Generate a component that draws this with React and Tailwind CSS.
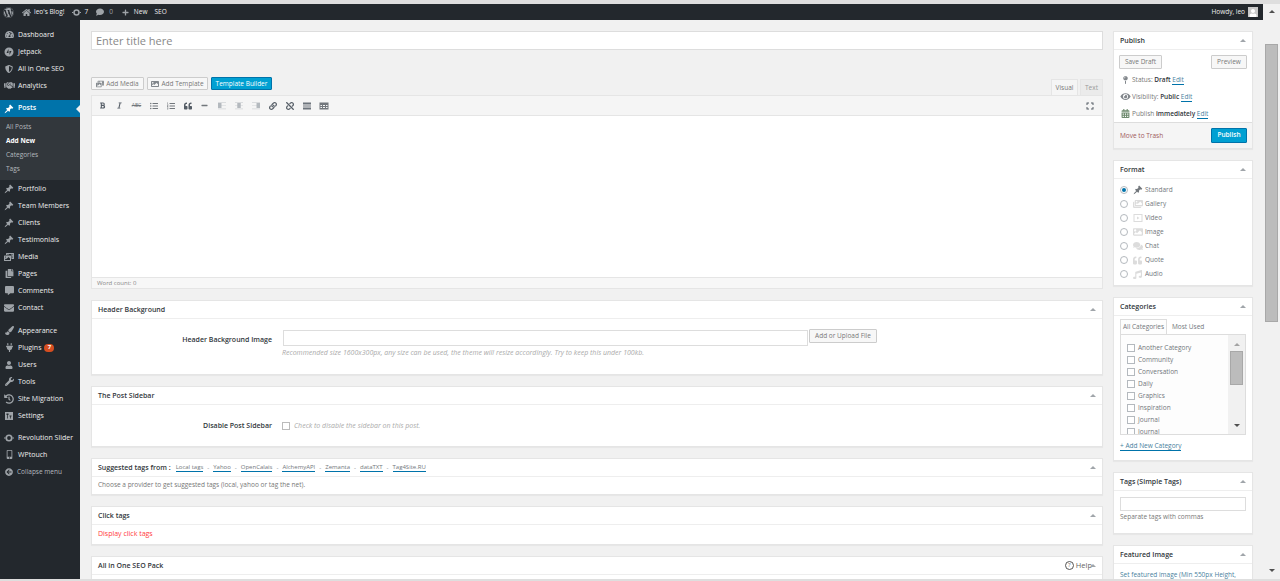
import {
  FaWordpress, FaHome, FaComment, FaPlus, FaShieldAlt, FaHandshake, FaPhotoVideo, FaCopy, FaCommentAlt,
  FaEnvelope, FaPaintBrush, FaPlug, FaUser, FaWrench, FaHistory, FaMobileAlt, FaArrowCircleLeft,
  FaBold, FaItalic, FaListUl, FaListOl, FaQuoteLeft, FaMinus, FaLink, FaUnlink, FaExpand, FaMapPin,
  FaEye, FaCalendarAlt, FaImages, FaImage, FaComments, FaMusic, FaTachometerAlt,
} from "react-icons/fa";

const pinPath =
  "M10.44 3.02l1.82-1.82 6.36 6.35-1.83 1.82c-1.05-.68-2.48-.57-3.41.36l-.75.75c-.92.93-1.04 2.35-.35 3.41l-1.83 1.82-2.41-2.41-2.8 2.79c-.42.42-3.38 2.71-3.8 2.29s1.86-3.39 2.28-3.81l2.79-2.79L4.1 9.36l1.83-1.82c1.05.69 2.48.57 3.4-.36l.75-.75c.93-.92 1.05-2.35.36-3.41z";

function Pin({ size = 10, className = "" }) {
  return (
    <svg viewBox="0 0 20 20" width={size} height={size} fill="currentColor" className={className}>
      <path d={pinPath} />
    </svg>
  );
}

function Ring({ size = 10, className = "" }) {
  return (
    <svg viewBox="0 0 20 20" width={size} height={size} fill="none" stroke="currentColor" className={className}>
      <circle cx="10" cy="10" r="5.5" strokeWidth="3.4" />
      <path d="M0 10h3M17 10h3" strokeWidth="2.4" />
    </svg>
  );
}

function Jetpack({ size = 10, className = "" }) {
  return (
    <svg viewBox="0 0 20 20" width={size} height={size} fill="currentColor" className={className}>
      <path d="M10 1a9 9 0 1 0 0 18 9 9 0 0 0 0-18zM9 4v8H5zm2 12V8l4 0z" fillRule="evenodd" />
    </svg>
  );
}

function Sliders({ size = 10, className = "" }) {
  return (
    <svg viewBox="0 0 20 20" width={size} height={size} fill="currentColor" className={className}>
      <path
        d="M2 2h16v16H2zM5 5v3h1.5v7H8V8h1V5zm6 4v2h1v4h1.5v-4H15V9z"
        fillRule="evenodd"
      />
    </svg>
  );
}

function VideoFrame({ size = 10, className = "" }) {
  return (
    <svg viewBox="0 0 20 20" width={size} height={size} fill="currentColor" className={className}>
      <path d="M1 2h18v16H1zM3 4v12h14V4zM8 7l5 3-5 3z" fillRule="evenodd" />
    </svg>
  );
}

function Align({ side }) {
  const block = { left: "M2 4h7v10H2z", center: "M6.5 4h7v10h-7z", right: "M11 4h7v10h-7z" }[side];
  return (
    <svg viewBox="0 0 20 20" width="10" height="10" className="text-[#b4b9be]" fill="currentColor">
      <path d={block} />
      <path d="M2 2h16v1.5H2zM2 15h16v1.5H2zM2 9h16v1H2z" opacity="0.55" />
    </svg>
  );
}

function MoreTag() {
  return (
    <svg viewBox="0 0 20 20" width="10" height="10" fill="currentColor" className="text-[#555d66]">
      <path d="M2 3h16v4H2zM2 9h16v2H2zM2 13h16v4H2z" opacity="0.85" />
    </svg>
  );
}

function TableGrid() {
  return (
    <svg viewBox="0 0 20 20" width="10" height="10" fill="currentColor" className="text-[#72777c]">
      <path d="M1 3h18v14H1zM3 8v2h3V8zm5 0v2h4V8zm6 0v2h3V8zM3 12v2h3v-2zm5 0v2h4v-2zm6 0v2h3v-2z" fillRule="evenodd" />
    </svg>
  );
}

function Caret({ up = true, className = "border-x-[3px] border-[#a0a5aa]" }) {
  return (
    <span
      className={`block h-0 w-0 border-x-transparent ${className} ${up ? "border-t-0 border-b-[3px]" : "border-b-0 border-t-[3px]"}`}
    />
  );
}

const topMenu = [
  { label: "Dashboard", icon: <FaTachometerAlt size={9} /> },
  { label: "Jetpack", icon: <Jetpack size={10} /> },
  { label: "All in One SEO", icon: <FaShieldAlt size={8} /> },
  { label: "Analytics", icon: <FaHandshake size={11} /> },
];

const contentMenu = [
  { label: "Portfolio", icon: <Pin /> },
  { label: "Team Members", icon: <Pin /> },
  { label: "Clients", icon: <Pin /> },
  { label: "Testimonials", icon: <Pin /> },
  { label: "Media", icon: <FaPhotoVideo size={10} /> },
  { label: "Pages", icon: <FaCopy size={9} /> },
  { label: "Comments", icon: <FaCommentAlt size={9} /> },
  { label: "Contact", icon: <FaEnvelope size={10} /> },
];

const adminMenu = [
  { label: "Appearance", icon: <FaPaintBrush size={9} /> },
  { label: "Plugins", icon: <FaPlug size={9} />, badge: "7" },
  { label: "Users", icon: <FaUser size={8} /> },
  { label: "Tools", icon: <FaWrench size={9} /> },
  { label: "Site Migration", icon: <FaHistory size={10} /> },
  { label: "Settings", icon: <Sliders size={10} /> },
];

const pluginMenu = [
  { label: "Revolution Slider", icon: <Ring size={10} /> },
  { label: "WPtouch", icon: <FaMobileAlt size={9} /> },
];

const categories = [
  "Another Category",
  "Community",
  "Conversation",
  "Daily",
  "Graphics",
  "Inspiration",
  "Journal",
  "Journal",
];

const formats = [
  { label: "Standard", icon: <Pin size={10} className="text-[#72777c]" />, checked: true },
  { label: "Gallery", icon: <FaImages size={10} className="text-[#dcdcdc]" /> },
  { label: "Video", icon: <VideoFrame size={10} className="text-[#dcdcdc]" /> },
  { label: "Image", icon: <FaImage size={10} className="text-[#dcdcdc]" /> },
  { label: "Chat", icon: <FaComments size={10} className="text-[#dcdcdc]" /> },
  { label: "Quote", icon: <FaQuoteLeft size={9} className="text-[#dcdcdc]" /> },
  { label: "Audio", icon: <FaMusic size={9} className="text-[#dcdcdc]" /> },
];

const tagSources = ["Local tags", "Yahoo", "OpenCalais", "AlchemyAPI", "Zemanta", "dataTXT", "Tag4Site.RU"];

const toolbar = [
  <FaBold size={7} className="text-[#555d66]" />,
  <FaItalic size={7} className="text-[#555d66]" />,
  <span className="text-[5px] text-[#72777c] line-through">ABC</span>,
  <FaListUl size={8} className="text-[#72777c]" />,
  <FaListOl size={8} className="text-[#72777c]" />,
  <FaQuoteLeft size={8} className="text-[#555d66]" />,
  <FaMinus size={7} className="text-[#72777c]" />,
  <Align side="left" />,
  <Align side="center" />,
  <Align side="right" />,
  <FaLink size={8} className="text-[#555d66]" />,
  <FaUnlink size={8} className="text-[#555d66]" />,
  <MoreTag />,
  <TableGrid />,
];

function MenuItem({ item }) {
  return (
    <div className="flex h-[17px] items-center text-[#eeeeee]">
      <span className="flex w-[18px] justify-center text-[#9ea3a8]">{item.icon}</span>
      <span className="pt-[1px]">{item.label}</span>
      {item.badge && (
        <span className="ml-[3px] flex h-[8px] w-[10px] items-center justify-center rounded-full bg-[#d54e21] text-[6px] font-bold text-white">
          {item.badge}
        </span>
      )}
    </div>
  );
}

function Sidebar() {
  return (
    <aside className="w-20 shrink-0 bg-[#23282d] pt-[6px] text-[7px]">
      {topMenu.map((item) => (
        <MenuItem key={item.label} item={item} />
      ))}
      <div className="mt-[6px] flex h-[17px] items-center bg-[#0073aa] font-semibold text-white">
        <span className="flex w-[18px] justify-center">
          <Pin />
        </span>
        <span>Posts</span>
        <span className="ml-auto h-0 w-0 border-y-[4px] border-r-[4px] border-y-transparent border-r-[#f1f1f1]" />
      </div>
      <div className="bg-[#32373c] pb-[4px] pl-[6px] pt-[3px] text-[6.5px] text-[#b4b9be]">
        <div className="flex h-[14px] items-center">All Posts</div>
        <div className="flex h-[14px] items-center font-bold text-white">Add New</div>
        <div className="flex h-[14px] items-center">Categories</div>
        <div className="flex h-[14px] items-center">Tags</div>
      </div>
      {contentMenu.map((item) => (
        <MenuItem key={item.label} item={item} />
      ))}
      <div className="mt-[6px]">
        {adminMenu.map((item) => (
          <MenuItem key={item.label} item={item} />
        ))}
      </div>
      <div className="mt-[5px]">
        {pluginMenu.map((item) => (
          <MenuItem key={item.label} item={item} />
        ))}
      </div>
      <div className="flex h-[17px] items-center text-[6.5px] text-[#b4b9be]">
        <span className="flex w-[17px] justify-center text-[#9ea3a8]">
          <FaArrowCircleLeft size={8} />
        </span>
        <span>Collapse menu</span>
      </div>
    </aside>
  );
}

function AdminBar() {
  return (
    <header className="flex h-4 shrink-0 items-center bg-[#23282d] text-[6.5px] text-[#eeeeee]">
      <FaWordpress size={11} className="ml-[3px] text-[#9ea3a8]" />
      <FaHome size={9} className="ml-[8px] text-[#9ea3a8]" />
      <span className="ml-[3px]">leo's Blog!</span>
      <Ring size={9} className="ml-[8px] text-[#9ea3a8]" />
      <span className="ml-[3px]">7</span>
      <FaComment size={8} className="ml-[8px] text-[#9ea3a8]" />
      <span className="ml-[5px] text-[#9ea3a8]">0</span>
      <FaPlus size={7} className="ml-[9px] text-[#9ea3a8]" />
      <span className="ml-[5px]">New</span>
      <span className="ml-[7px]">SEO</span>
      <span className="ml-auto">Howdy, leo</span>
      <span className="ml-[3px] mr-[5px] flex h-[10px] w-[10px] items-end justify-center bg-[#c9c9c9] text-white">
        <FaUser size={8} />
      </span>
    </header>
  );
}

function Button({ children, className = "" }) {
  return (
    <span
      className={`flex items-center justify-center gap-[2px] rounded-[1px] border border-[#cccccc] bg-[#f7f7f7] text-[6.5px] text-[#777777] ${className}`}
    >
      {children}
    </span>
  );
}

function PrimaryButton({ children, className = "" }) {
  return (
    <span
      className={`flex items-center justify-center rounded-[1px] border border-[#0073aa] bg-[#00a0d2] text-[6.5px] text-white ${className}`}
    >
      {children}
    </span>
  );
}

function Box({ title, className = "", extra, children }) {
  return (
    <section className={`shrink-0 overflow-hidden border border-[#e5e5e5] bg-white shadow-[0_1px_1px_rgba(0,0,0,0.04)] ${className}`}>
      <div className="flex h-[18px] items-center border-b border-[#eeeeee] pl-[6px] pr-[6px] text-[7px] font-semibold text-[#32373c]">
        <span className="flex items-center pt-[1px]">{title}</span>
        <span className="ml-auto flex items-center">
          {extra}
          <Caret />
        </span>
      </div>
      {children}
    </section>
  );
}

function Editor() {
  return (
    <>
      <div className="flex h-[18px] shrink-0 items-start">
        <Button className="h-[13px] w-[53px]">
          <FaPhotoVideo size={8} className="text-[#82878c]" />
          Add Media
        </Button>
        <Button className="ml-[3px] h-[13px] w-[61px]">
          <FaImage size={8} className="text-[#82878c]" />
          Add Template
        </Button>
        <PrimaryButton className="ml-[3px] h-[13px] w-[61px]">Template Builder</PrimaryButton>
        <span className="ml-auto mt-[2px] flex h-4 w-[27px] items-center justify-center border border-b-0 border-[#e5e5e5] bg-[#f5f5f5] text-[6.5px] text-[#777777]">
          Visual
        </span>
        <span className="ml-[2px] mt-[2px] flex h-4 w-[23px] items-center justify-center border border-b-0 border-[#e5e5e5] bg-[#ebebeb] text-[6.5px] text-[#999999]">
          Text
        </span>
      </div>
      <div className="shrink-0 border border-[#e5e5e5] bg-white">
        <div className="flex h-[20px] items-center border-b border-[#e5e5e5] bg-[#f5f5f5] pl-[2px] pr-[8px]">
          {toolbar.map((tool, i) => (
            <span key={i} className="flex w-[17px] justify-center">
              {tool}
            </span>
          ))}
          <FaExpand size={8} className="ml-auto text-[#555d66]" />
        </div>
        <div className="h-[161px]" />
        <div className="flex h-[11px] items-center border-t border-[#e5e5e5] bg-[#f7f7f7] pl-[5px] text-[6px] text-[#888888]">
          Word count: 0
        </div>
      </div>
    </>
  );
}

function LeftColumn() {
  return (
    <div className="flex min-w-0 flex-1 flex-col">
      <div className="flex h-[19px] shrink-0 items-center border border-[#dddddd] bg-white pl-[4px] pt-[2px] text-[11px] text-[#888888]">
        Enter title here
      </div>
      <div className="mt-[27px]">
        <Editor />
      </div>

      <Box title="Header Background" className="mt-[11px] h-[75px]">
        <div className="flex pt-[11px]">
          <span className="w-[180px] pt-[5px] text-right text-[7px] font-semibold text-[#32373c]">
            Header Background Image
          </span>
          <div className="ml-[11px]">
            <div className="flex items-start">
              <span className="h-4 w-[525px] border border-[#dddddd] bg-white" />
              <Button className="ml-[1px] mt-[-1px] h-[14px] w-[68px]">Add or Upload File</Button>
            </div>
            <p className="ml-[-1px] mt-[2px] text-[7px] italic text-[#aaaaaa]">
              Recommended size 1600x300px, any size can be used, the theme will resize accordingly. Try to keep this under 100kb.
            </p>
          </div>
        </div>
      </Box>

      <Box title="The Post Sidebar" className="mt-[11px] h-[61px]">
        <div className="flex items-center pt-[16px]">
          <span className="w-[180px] text-right text-[7px] font-semibold text-[#32373c]">Disable Post Sidebar</span>
          <span className="ml-[10px] h-[8px] w-[8px] border border-[#bbbbbb] bg-white" />
          <span className="ml-[4px] text-[7px] italic text-[#aaaaaa]">Check to disable the sidebar on this post.</span>
        </div>
      </Box>

      <Box
        title={
          <>
            Suggested tags from :
            <span className="ml-[5px] flex items-center text-[6px] font-normal text-[#72777c]">
              {tagSources.map((source, i) => (
                <span key={source} className="flex items-center">
                  {i > 0 && <span className="mx-[4px]">-</span>}
                  <span className="border-b border-[#0073aa] leading-[7px]">{source}</span>
                </span>
              ))}
            </span>
          </>
        }
        className="mt-[11px] h-[37px]"
      >
        <p className="pl-[6px] pt-[3px] text-[6.5px] text-[#777777]">
          Choose a provider to get suggested tags (local, yahoo or tag the net).
        </p>
      </Box>

      <Box title="Click tags" className="mt-[11px] h-[39px]">
        <p className="pl-[6px] pt-[4px] text-[7px] text-[#ff3c3c]">Display click tags</p>
      </Box>

      <Box
        title="All in One SEO Pack"
        className="mt-[11px] h-[40px]"
        extra={
          <span className="mr-[-2px] flex items-center gap-[2px] text-[7.5px] font-normal text-[#666666]">
            <span className="flex h-[9px] w-[9px] items-center justify-center rounded-full border border-[#555555] text-[6px]">
              ?
            </span>
            Help
          </span>
        }
      />
    </div>
  );
}

function PublishBox() {
  return (
    <Box title="Publish" className="h-[118px]">
      <div className="flex justify-between px-[5px] pt-[5px]">
        <Button className="h-[14px] w-[43px]">Save Draft</Button>
        <Button className="h-[14px] w-[36px]">Preview</Button>
      </div>
      <div className="h-[53px] pl-[5px] pt-[2px] text-[6.5px] text-[#777777]">
        <div className="flex h-[17px] items-center">
          <FaMapPin size={8} className="w-[13px] text-[#82878c]" />
          <span>
            Status: <b className="font-semibold text-[#32373c]">Draft</b>{" "}
            <span className="border-b border-[#0073aa] text-[#4a7f9e]">Edit</span>
          </span>
        </div>
        <div className="flex h-[17px] items-center">
          <FaEye size={9} className="w-[13px] text-[#82878c]" />
          <span>
            Visibility: <b className="font-semibold text-[#32373c]">Public</b>{" "}
            <span className="border-b border-[#0073aa] text-[#4a7f9e]">Edit</span>
          </span>
        </div>
        <div className="flex h-[17px] items-center">
          <FaCalendarAlt size={9} className="w-[13px] text-[#6f8a6f]" />
          <span>
            Publish <b className="font-semibold text-[#32373c]">immediately</b>{" "}
            <span className="border-b border-[#0073aa] text-[#4a7f9e]">Edit</span>
          </span>
        </div>
      </div>
      <div className="flex h-[26px] items-center justify-between border-t border-[#dddddd] bg-[#f5f5f5] pb-[1px] pl-[6px] pr-[5px]">
        <span className="pt-[2px] text-[6.5px] text-[#a05a5a]">Move to Trash</span>
        <PrimaryButton className="h-[15px] w-[36px] font-semibold">Publish</PrimaryButton>
      </div>
    </Box>
  );
}

function FormatBox() {
  return (
    <Box title="Format" className="mt-[11px] h-[126px]">
      <div className="pl-[6px] pt-[4px] text-[6.5px] text-[#72777c]">
        {formats.map((format) => (
          <div key={format.label} className="flex h-[14px] items-center">
            <span className="flex h-[8px] w-[8px] items-center justify-center rounded-full border border-[#b4b9be] bg-white">
              {format.checked && <span className="h-[4px] w-[4px] rounded-full bg-[#0073aa]" />}
            </span>
            <span className="ml-[4px] flex w-[11px] justify-center">{format.icon}</span>
            <span className="ml-[2px]">{format.label}</span>
          </div>
        ))}
      </div>
    </Box>
  );
}

function CategoriesBox() {
  return (
    <Box title="Categories" className="mt-[11px] h-[164px]">
      <div className="px-[6px] pt-[3px]">
        <div className="flex h-[15px] items-center text-[6.5px] text-[#72777c]">
          <span className="relative z-10 flex h-[15px] w-[47px] items-center justify-center border border-b-0 border-[#dddddd] bg-[#fdfdfd]">
            All Categories
          </span>
          <span className="ml-[5px]">Most Used</span>
        </div>
        <div className="flex h-[101px] border border-[#dddddd] bg-[#fdfdfd]">
          <div className="min-w-0 flex-1 overflow-hidden pl-[6px] pt-[7px] text-[6.5px] text-[#72777c]">
            {categories.map((name, i) => (
              <div key={i} className="flex h-[12px] items-center">
                <span className="h-[8px] w-[8px] shrink-0 border border-[#b4b9be] bg-white" />
                <span className="ml-[3px]">{name}</span>
              </div>
            ))}
          </div>
          <div className="flex w-[17px] flex-col items-center bg-[#f1f1f1] pt-[8px]">
            <Caret className="border-x-[3.5px] border-[#a3a3a3]" />
            <span className="mt-[5px] h-[34px] w-[13px] border border-[#a8a8a8] bg-[#bcbcbc]" />
            <span className="mb-[7px] mt-auto">
              <Caret up={false} className="border-x-[3.5px] border-[#505050]" />
            </span>
          </div>
        </div>
        <span className="mt-[6px] block w-fit border-b border-[#0073aa] text-[6.5px] leading-[9px] text-[#4a7f9e]">
          + Add New Category
        </span>
      </div>
    </Box>
  );
}

function RightColumn() {
  return (
    <div className="ml-[10px] flex w-[140px] shrink-0 flex-col">
      <PublishBox />
      <FormatBox />
      <CategoriesBox />
      <Box title="Tags (Simple Tags)" className="mt-[11px] h-[62px]">
        <div className="px-[6px] pt-[6px]">
          <div className="h-[14px] border border-[#dddddd] bg-white" />
          <p className="mt-[1px] text-[6.5px] text-[#777777]">Separate tags with commas</p>
        </div>
      </Box>
      <Box title="Featured Image" className="mt-[11px] h-[60px]">
        <p className="pl-[6px] pt-[6px] text-[6.5px] leading-[9px] text-[#4a7f9e]">
          <span className="border-b border-[#0073aa]">Set featured image (Min 550px Height,</span>
        </p>
      </Box>
    </div>
  );
}

function Scrollbar() {
  return (
    <div className="flex w-[17px] shrink-0 flex-col items-center bg-[#f1f1f1] pb-[7px] pt-[6px]">
      <Caret className="border-x-[3.5px] border-[#505050]" />
      <span className="mt-[31px] h-[278px] w-[13px] border border-[#a8a8a8] bg-[#bcbcbc]" />
      <span className="mt-auto">
        <Caret up={false} className="border-x-[3.5px] border-[#505050]" />
      </span>
    </div>
  );
}

export default function App() {
  return (
    <div className="flex h-[581px] flex-col overflow-hidden bg-[#f1f1f1] font-['Open_Sans',sans-serif]">
      <div className="h-1 shrink-0 bg-[#dedede]" />
      <div className="flex min-h-0 flex-1">
        <div className="flex min-w-0 flex-1 flex-col">
          <AdminBar />
          <div className="flex min-h-0 flex-1">
            <Sidebar />
            <main className="flex min-w-0 flex-1 overflow-hidden pl-[11px] pr-[10px] pt-[11px]">
              <LeftColumn />
              <RightColumn />
            </main>
          </div>
        </div>
        <Scrollbar />
      </div>
      <div className="h-[2px] shrink-0 bg-[#dedede]" />
    </div>
  );
}
